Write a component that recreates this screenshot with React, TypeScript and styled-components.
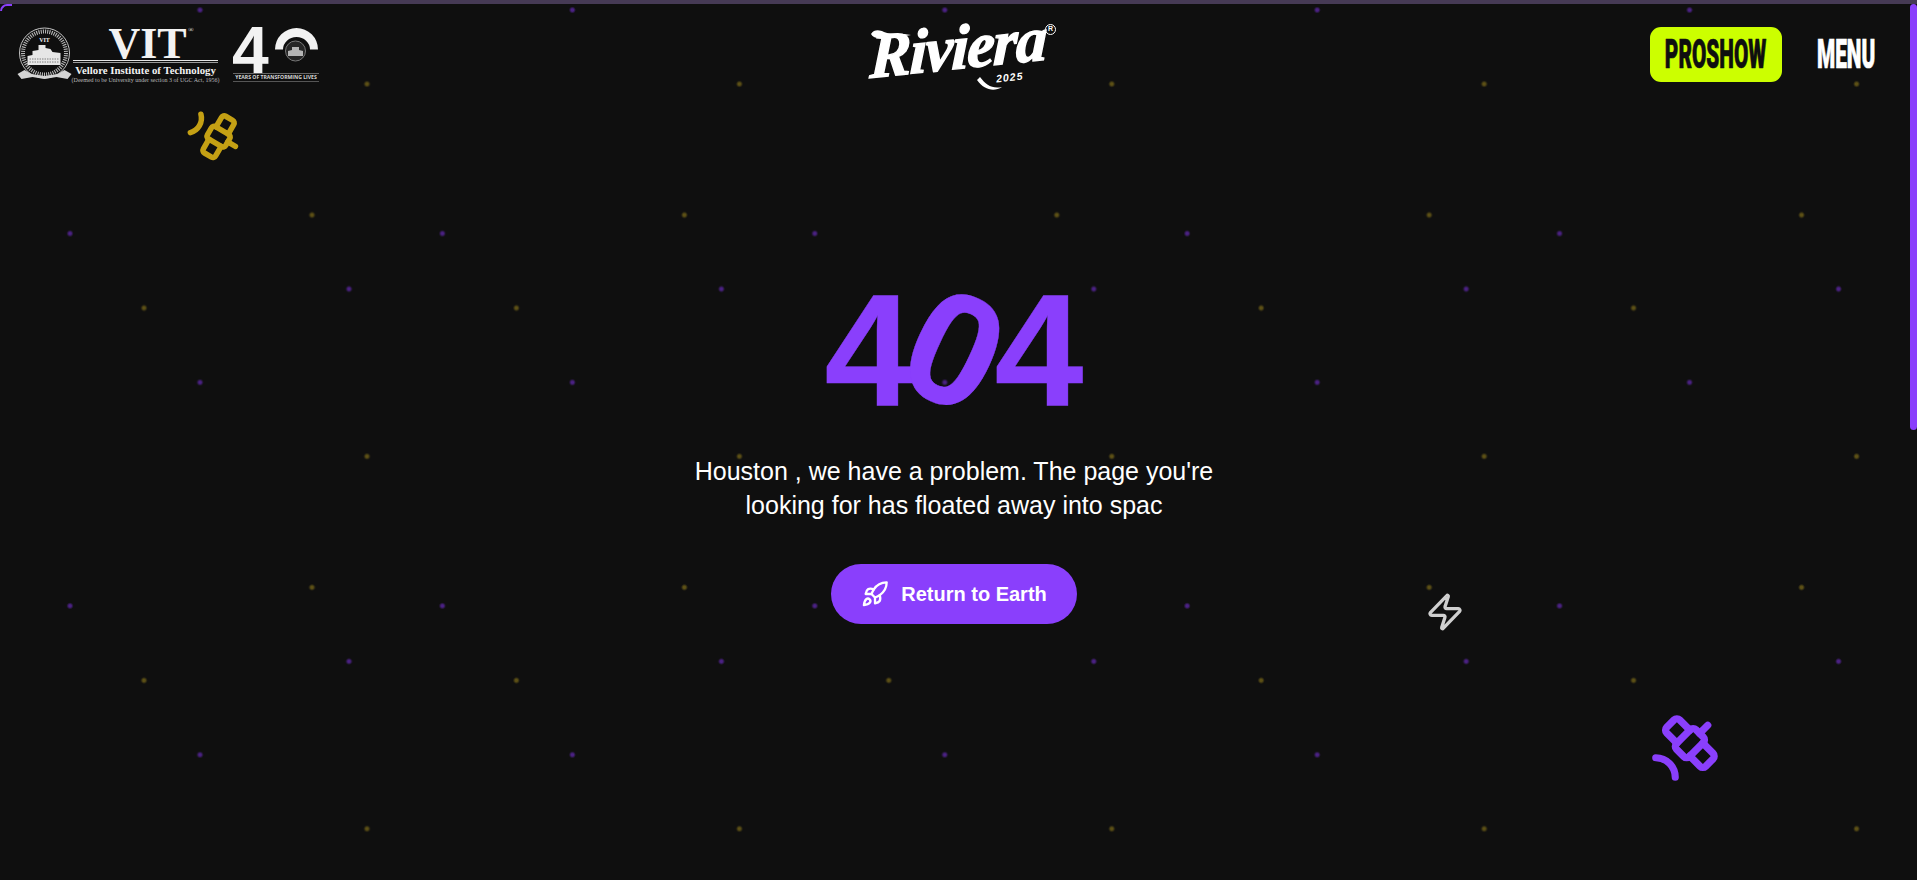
import React from "react";
import styled, { createGlobalStyle } from "styled-components";
import { Rocket, Satellite, Zap } from "lucide-react";

const PURPLE = "#8a3ffc";
const dot = (x: number, y: number, c: string) =>
  `radial-gradient(circle 3.5px at ${x}px ${y}px, ${c} 0, ${c} 35%, transparent 100%)`;

const Global = createGlobalStyle`
  html, body { margin: 0; padding: 0; height: 100%; background: #0f0f0f; overflow: hidden; }
  * { box-sizing: border-box; }
`;

const Shell = styled.div`
  position: relative;
  width: 1917px;
  height: 880px;
  overflow: hidden;
  display: flex;
  flex-direction: column;
  background-color: #0f0f0f;
  background-image: ${[
    dot(70, 233.5, "rgba(130,50,240,.52)"),
    dot(349, 289, "rgba(130,50,240,.52)"),
    dot(200, 10, "rgba(130,50,240,.52)"),
    dot(144, 308, "rgba(200,170,30,.42)"),
    dot(312, 215, "rgba(200,170,30,.42)"),
    dot(367, 84, "rgba(200,170,30,.42)"),
  ].join(",")};
  background-size: 372.4px 372.4px;
  font-family: "Liberation Sans", Arial, sans-serif;
  color: #fff;
`;

const TopStrip = styled.div`
  height: 4px;
  flex: none;
  background: #463a55;
`;

const CornerArc = styled.span`
  position: absolute;
  top: 4px;
  left: 0;
  width: 12px;
  height: 7px;
  border-top: 2px solid ${PURPLE};
  border-left: 2px solid ${PURPLE};
  border-top-left-radius: 12px;
`;

const Body = styled.div`
  flex: 1;
  display: flex;
  min-height: 0;
`;

const Viewport = styled.div`
  flex: 1;
  position: relative;
  display: flex;
  flex-direction: column;
  min-width: 0;
`;

const ScrollTrack = styled.div`
  width: 7px;
  flex: none;
`;

const ScrollThumb = styled.div`
  height: 426px;
  background: ${PURPLE};
  border-radius: 4px;
`;

const Header = styled.header`
  display: grid;
  grid-template-columns: 1fr auto 1fr;
  align-items: flex-start;
  height: 100px;
  padding: 23px 35px 0 17px;
`;

const LogoGroup = styled.div`
  display: flex;
  align-items: flex-start;
`;

const Seal = styled.svg`
  width: 55px;
  height: 54px;
  flex: none;
`;

const VitBlock = styled.div`
  width: 145px;
  margin-left: 1px;
  font-family: "Liberation Serif", serif;
  color: #f2f2f2;
  display: flex;
  flex-direction: column;
  align-items: center;
`;

const VitMark = styled.div`
  font-size: 44px;
  font-weight: 700;
  line-height: 34px;
  height: 33px;
  margin-left: 4px;
  position: relative;
`;

const VitReg = styled.sup`
  position: absolute;
  top: -2px;
  right: -7px;
  font-size: 7px;
  line-height: 10px;
  font-weight: 400;
`;

const VitRule = styled.div`
  width: 100%;
  height: 3px;
  border-top: 1px solid #e4e4e4;
  border-bottom: 1px solid #9a9a9a;
`;

const VitName = styled.div`
  font-size: 10.8px;
  line-height: 12px;
  font-weight: 700;
  white-space: nowrap;
  margin-top: 1px;
`;

const VitNote = styled.div`
  font-size: 6px;
  line-height: 8px;
  white-space: nowrap;
  color: #b9b9b9;
`;

const FortyBlock = styled.div`
  width: 86px;
  margin-left: 15px;
`;

const FortySvg = styled.svg`
  display: block;
  width: 86px;
  height: 46px;
  overflow: visible;
`;

const FortyCaption = styled.div`
  width: 86px;
  height: 9px;
  border-top: 1px solid #666;
  border-bottom: 1px solid #555;
  font-family: "Open Sans", sans-serif;
  font-size: 5.1px;
  line-height: 7px;
  font-weight: 700;
  white-space: nowrap;
  text-align: center;
  color: #d8d8d8;
`;

const BrandWrap = styled.div`
  position: relative;
  width: 190px;
  height: 62px;
  margin-left: 38px;
`;

const BrandName = styled.div`
  position: absolute;
  left: 0;
  top: -5px;
  font-family: "Liberation Serif", serif;
  font-style: italic;
  font-weight: 700;
  font-size: 64px;
  line-height: 70px;
  letter-spacing: -1.5px;
  white-space: nowrap;
  -webkit-text-stroke: 1.4px #fff;
  transform: skewX(-8deg) rotate(-6deg) scaleX(0.96);
  transform-origin: left center;
`;

const BrandSwash = styled.svg`
  position: absolute;
  left: -8px;
  top: -2px;
  width: 190px;
  height: 66px;
  pointer-events: none;
`;

const BrandReg = styled.span`
  position: absolute;
  left: 175px;
  top: -3px;
  width: 11px;
  height: 11px;
  border: 1.5px solid #fff;
  border-radius: 50%;
  font-size: 7px;
  line-height: 8px;
  font-weight: 700;
  text-align: center;
`;

const BrandYear = styled.span`
  position: absolute;
  left: 126px;
  top: 44px;
  font-size: 10.5px;
  line-height: 12px;
  font-weight: 700;
  font-style: italic;
  letter-spacing: 1px;
  transform: rotate(-6deg);
`;

const Nav = styled.nav`
  display: flex;
  justify-content: flex-end;
  align-items: center;
  gap: 35px;
`;

const Condensed = styled.span`
  display: inline-block;
  font-family: "Roboto", "Liberation Sans", sans-serif;
  font-weight: 900;
  font-size: 40px;
  line-height: 1;
  white-space: nowrap;
  transform: scale(0.52, 1);
  -webkit-text-stroke: 0.7px currentColor;
`;

const ProshowButton = styled.button`
  width: 132px;
  height: 55px;
  border: 0;
  padding: 0;
  border-radius: 11px;
  background: #ccff00;
  color: #0f0f0f;
  display: flex;
  align-items: center;
  justify-content: center;
`;

const MenuButton = styled.button`
  width: 58px;
  height: 55px;
  border: 0;
  padding: 0;
  background: none;
  color: #fff;
  display: flex;
  align-items: center;
  justify-content: center;
`;

const Main = styled.main`
  display: flex;
  flex-direction: column;
  align-items: center;
  padding: 166px 2px 0 0;
`;

const Code = styled.h1`
  margin: 0;
  font-size: 160px;
  line-height: 160px;
  font-weight: 700;
  color: ${PURPLE};
  -webkit-text-stroke: 0.4px ${PURPLE};
  display: flex;
  align-items: center;
  font-family: "Liberation Sans", Arial, sans-serif;
`;

const Zero = styled.span`
  display: inline-block;
  margin: 0 -4px;
  transform: rotate(25deg);
`;

const Message = styled.p`
  margin: 24px 0 0;
  width: 580px;
  text-align: center;
  font-size: 25px;
  line-height: 34px;
`;

const ReturnLink = styled.a`
  margin-top: 42px;
  width: 246px;
  height: 60px;
  border-radius: 30px;
  background: ${PURPLE};
  color: #fff;
  display: flex;
  align-items: center;
  justify-content: center;
  gap: 12px;
  font-size: 20px;
  font-weight: 700;
`;

const Floater = styled.span<{ $x: number; $y: number; $size: number; $rot: number; $color: string }>`
  position: absolute;
  left: ${(p) => p.$x}px;
  top: ${(p) => p.$y}px;
  width: ${(p) => p.$size}px;
  height: ${(p) => p.$size}px;
  color: ${(p) => p.$color};
  transform: rotate(${(p) => p.$rot}deg);
  svg { display: block; width: 100%; height: 100%; }
`;

const SealGraphic = () => (
  <Seal viewBox="0 0 54 54">
    <circle cx="27" cy="26" r="25" fill="none" stroke="#d8d8d8" strokeWidth=".9" />
    <circle cx="27" cy="26" r="21.5" fill="none" stroke="#b5b5b5" strokeWidth="4" strokeDasharray="1.1 1.1" />
    <text x="27" y="15" textAnchor="middle" fontSize="6" fontWeight="700" fontFamily="Liberation Serif" fill="#eee">VIT</text>
    <path d="M10 38V29l5-1v-4l6-1v-5h7v3l5 1 2 3 8 1v12Z" fill="#e6e6e6" />
    <path d="M12 32h30M12 35h30" stroke="#666" strokeWidth=".8" strokeDasharray="1.5 1" />
    <path d="M0 47 7 43 14 47 27 49 40 47 47 43 54 47 50 52 39 50 27 52 15 50 4 52Z" fill="#d4d4d4" />
  </Seal>
);

const FortyGraphic = () => (
  <FortySvg viewBox="0 0 86 46">
    <text x="-1" y="46" fontSize="66" fontWeight="700" fontFamily="Liberation Sans" fill="#f2f2f2">4</text>
    <path d="M42 22.5a21.5 21.5 0 0 1 43 0h-8a13 12 0 0 0-27 0Z" fill="#f2f2f2" />
    <circle cx="62.5" cy="24" r="10" fill="#262626" stroke="#777" strokeWidth="1" />
    <path d="M55 29v-5l4-1v-3h7v3l4 1v5Z" fill="#b5b5b5" />
  </FortySvg>
);

export default function App() {
  return (
    <Shell>
      <Global />
      <TopStrip />
      <CornerArc />
      <Body>
        <Viewport>
          <Header>
            <LogoGroup>
              <SealGraphic />
              <VitBlock>
                <VitMark>
                  VIT<VitReg>®</VitReg>
                </VitMark>
                <VitRule />
                <VitName>Vellore Institute of Technology</VitName>
                <VitNote>(Deemed to be University under section 3 of UGC Act, 1956)</VitNote>
              </VitBlock>
              <FortyBlock>
                <FortyGraphic />
                <FortyCaption>YEARS OF TRANSFORMING LIVES</FortyCaption>
              </FortyBlock>
            </LogoGroup>
            <BrandWrap>
              <BrandSwash viewBox="0 0 190 66">
                <path d="M9 9c3-5 9-4 13-2 8 3 18 1 27 3-9 2-20 3-29 1-4 2-8 3-11-2Z" fill="#fff" />
                <path d="M118 52c6 8 12 12 22 10-8 5-18 3-25-7Z" fill="#fff" />
              </BrandSwash>
              <BrandName>Riviera</BrandName>
              <BrandReg>R</BrandReg>
              <BrandYear>2025</BrandYear>
            </BrandWrap>
            <Nav>
              <ProshowButton>
                <Condensed>PROSHOW</Condensed>
              </ProshowButton>
              <MenuButton>
                <Condensed>MENU</Condensed>
              </MenuButton>
            </Nav>
          </Header>
          <Main>
            <Code>
              <span>4</span>
              <Zero>0</Zero>
              <span>4</span>
            </Code>
            <Message>
              Houston , we have a problem. The page you're looking for has floated away into spac
            </Message>
            <ReturnLink>
              <Rocket size={28} strokeWidth={2} />
              Return to Earth
            </ReturnLink>
          </Main>
          <Floater $x={184} $y={100} $size={60} $rot={75} $color="#c4a014">
            <Satellite strokeWidth={2.2} />
          </Floater>
          <Floater $x={1646} $y={705} $size={78} $rot={0} $color={PURPLE}>
            <Satellite strokeWidth={2.2} />
          </Floater>
          <Floater $x={1425} $y={588} $size={40} $rot={0} $color="#cfcfcf">
            <Zap strokeWidth={2} />
          </Floater>
        </Viewport>
        <ScrollTrack>
          <ScrollThumb />
        </ScrollTrack>
      </Body>
    </Shell>
  );
}
